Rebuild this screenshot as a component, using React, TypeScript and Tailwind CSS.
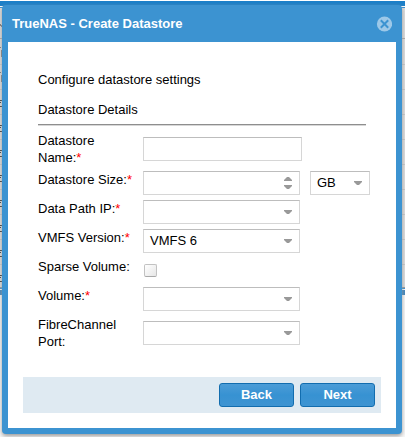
import type { ReactNode } from "react";

function Caret({ up = false }: { up?: boolean }) {
  return (
    <svg width="8" height="4" viewBox="0 0 8 4" className="block">
      <path d={up ? "M0 4V3L3 0H5L8 3V4Z" : "M0 0H8V1L5 4H3L0 1Z"} fill="#999" />
    </svg>
  );
}

function Field({ value = "", kind = "select", width = "w-[157px]" }: { value?: string; kind?: "text" | "select" | "spinner"; width?: string }) {
  return (
    <div className={`flex h-6 shrink-0 items-center justify-between border border-[#d6d6d6] border-t-[#bdbdbd] bg-white pr-[7px] pl-1.5 ${width}`}>
      <span className="text-[13px] leading-4">{value}</span>
      {kind === "select" && <Caret />}
      {kind === "spinner" && (
        <div className="flex flex-col gap-1">
          <Caret up />
          <Caret />
        </div>
      )}
    </div>
  );
}

function Row({ label, secondLine, required = false, tall = false, children }: { label: string; secondLine?: string; required?: boolean; tall?: boolean; children: ReactNode }) {
  return (
    <div className={`flex items-start ${tall ? "h-[34px]" : "h-[29px]"}`}>
      <div className={`w-[105px] shrink-0 text-[13px] leading-[17px] whitespace-nowrap ${secondLine ? "-mt-[5px]" : "mt-0"}`}>
        {label}
        {secondLine && <br />}
        {secondLine}
        {required && <span className="text-[#f00]">*</span>}
      </div>
      {children}
    </div>
  );
}

function Button({ children }: { children: ReactNode }) {
  return (
    <button className="h-6 w-[75px] rounded-[3px] border border-[#126daf] bg-linear-to-b from-[#4b9cd7] from-0% via-[#3792d2] via-50% to-[#3e94d2] text-[13px] leading-4 font-bold text-white">
      {children}
    </button>
  );
}

const gridLines = [38, 64, 89, 114, 139, 164, 189, 214, 239, 264];
const linkRows = [102, 127, 152, 177, 202, 227, 252, 277];

function Backdrop() {
  return (
    <svg width="405" height="437" className="absolute inset-0" shapeRendering="crispEdges">
      <rect width="405" height="437" fill="#f8f8f8" />
      <rect width="405" height="1" fill="#fff" />
      <rect y="1" width="405" height="5" fill="#1c7fc8" />
      <rect y="6" width="405" height="1" fill="#fff" />
      <rect y="7" width="405" height="1" fill="#3892d3" />
      <rect y="8" width="405" height="279" fill="#dedede" />
      {gridLines.map((y) => (
        <rect key={y} y={y} width="405" height="1" fill={y === 38 ? "#aaa" : "#c9c9c9"} />
      ))}
      <path d="M0 24L2 27M0 47h1M1 50v7M0 72h1M1 75v7" stroke="#777" />
      {linkRows.map((y) => (
        <path key={y} d={`M0 ${y - 1.5}h2M0 ${y + 0.5}h1M0 ${y + 4.5}h2`} stroke="#333" />
      ))}
      <rect y="287" width="405" height="1" fill="#999" />
      <rect y="288" width="405" height="1" fill="#3892d3" />
      <rect y="289" width="405" height="1" fill="#fff" />
      <rect y="290" width="405" height="5" fill="#3d83bb" />
    </svg>
  );
}

export default function App() {
  return (
    <div className="relative h-[437px] w-[405px] overflow-hidden pt-[5px] pl-0.5 font-['Liberation_Sans',Arial,sans-serif] text-black">
      <Backdrop />
      <div className="relative flex h-[429px] w-[400px] flex-col rounded bg-[#3c93d1] px-1.5 pb-1.5 shadow-[0_2px_4px_#999]">
        <header className="flex h-[37px] shrink-0 items-center justify-between px-1">
          <h1 className="text-[13px] leading-4 font-bold text-white">TrueNAS - Create Datastore</h1>
          <svg width="16" height="16" viewBox="0 0 16 16">
            <circle cx="8.5" cy="8" r="7.6" fill="#9dc8e8" />
            <path d="M4.8 4.3L12.2 11.7M12.2 4.3L4.8 11.7" stroke="#3c93d1" strokeWidth="2" />
          </svg>
        </header>
        <main className="flex grow flex-col bg-white px-[15px] pb-[15px]">
          <div className="px-[15px] pt-[30px]">
            <p className="text-[13px] leading-4">Configure datastore settings</p>
            <h2 className="mt-3.5 text-[13px] leading-4">Datastore Details</h2>
            <div className="mt-1.5 mb-[11px] h-0.5 border-t border-b border-t-[#8e8e8e] border-b-[#d7d7d7]" />
            <Row label="Datastore" secondLine="Name:" required tall>
              <Field kind="text" width="w-[159px]" />
            </Row>
            <Row label="Datastore Size:" required>
              <Field kind="spinner" />
              <div className="ml-2.5">
                <Field value="GB" width="w-[60px]" />
              </div>
            </Row>
            <Row label="Data Path IP:" required>
              <Field />
            </Row>
            <Row label="VMFS Version:" required>
              <Field value="VMFS 6" />
            </Row>
            <Row label="Sparse Volume:">
              <div className="mt-1.5 ml-px size-[13px] rounded-[2px] border border-[#c2c2c2] border-b-[#a8a8a8] bg-linear-to-br from-white to-[#e6e6e6]" />
            </Row>
            <Row label="Volume:" required tall>
              <Field />
            </Row>
            <Row label="FibreChannel" secondLine="Port:">
              <Field />
            </Row>
          </div>
          <footer className="mt-auto flex h-9 items-center justify-end gap-1.5 bg-[#dfeaf2] pr-1.5">
            <Button>Back</Button>
            <Button>Next</Button>
          </footer>
        </main>
      </div>
    </div>
  );
}
